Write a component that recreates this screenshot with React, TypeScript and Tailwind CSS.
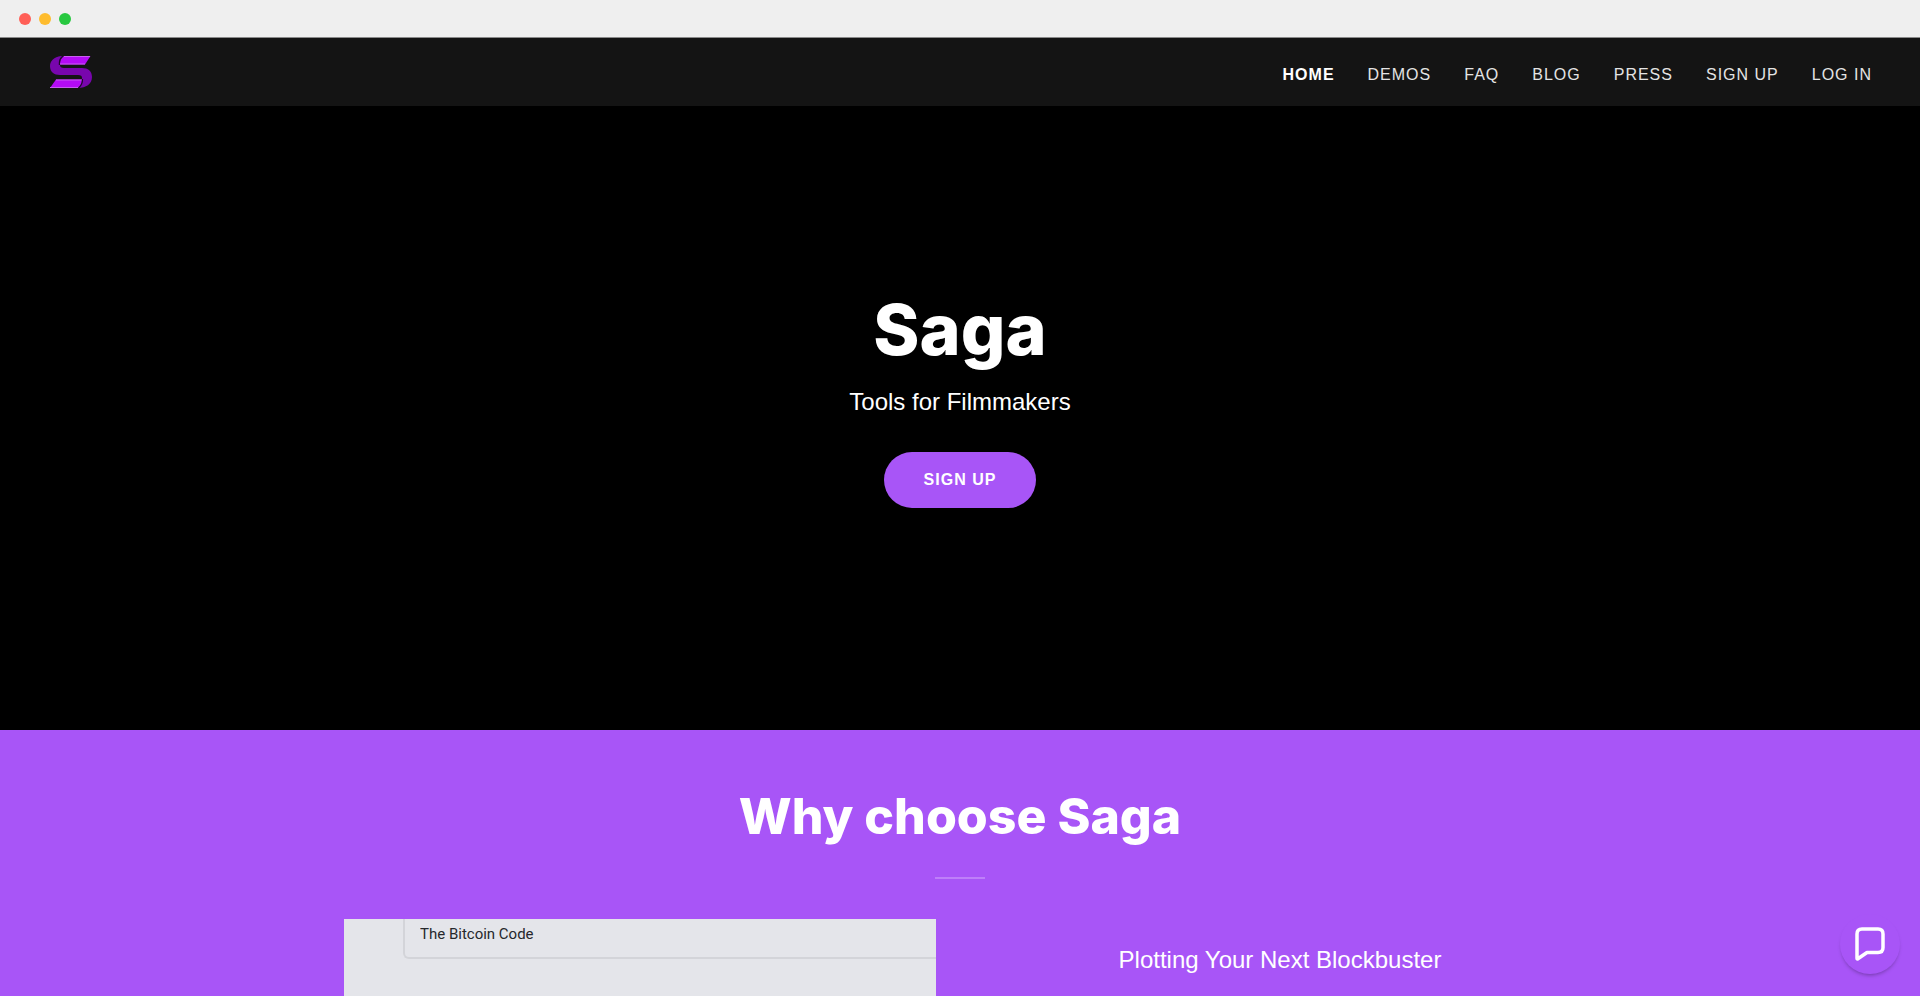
const navLinks = ['Home', 'Demos', 'FAQ', 'Blog', 'Press', 'Sign Up', 'Log In']

function Logo() {
  return (
    <svg viewBox="0 0 42 32" className="w-[42px] h-8" aria-hidden="true">
      <path d="M11 0C4 1 0 5 0 10c0 6 4 9 10 9h18c3 0 4 1 4 3 0 4-2 8-4 10 8 0 14-4 14-11 0-6-4-9-10-9H14c-3 0-4-1-4-3 0-4 1-7 3-9z" fill="#7806ad" />
      <path d="M14 0H40.500L35 8.500H10C10 5 11 2 14 0z" fill="#b40bf5" />
      <path d="M6 23.500H32C32 27 31 30 28 32H0z" fill="#b40bf5" />
      <path d="M14 .5H40M10 8H35M6 24H32M0 31.500H28" stroke="#c85cf0" strokeWidth="1" />
      <path d="M13 0C10 2 9 5 9.500 9M32.500 23C32.500 27 31 30 28.500 32" stroke="#1c0a26" strokeWidth="1.200" fill="none" />
    </svg>
  )
}

function BrowserBar() {
  return (
    <div className="flex items-center gap-2 h-[38px] pl-[19px] bg-[#efefef] border-b border-[#8a8a8a]">
      <span className="w-3 h-3 rounded-full bg-[#ff5f57]" />
      <span className="w-3 h-3 rounded-full bg-[#febc2e]" />
      <span className="w-3 h-3 rounded-full bg-[#28c840]" />
    </div>
  )
}

function Header() {
  return (
    <header className="flex items-center justify-between h-[68px] pl-[50px] pr-12 bg-[#141414]">
      <a href="#" aria-label="Saga">
        <Logo />
      </a>
      <nav className="flex gap-[33px] pt-1.5">
        {navLinks.map((label, i) => (
          <a
            key={label}
            href="#"
            className={i === 0
              ? 'text-base uppercase tracking-[1px] font-bold text-white'
              : 'text-base uppercase tracking-[1px] text-[#e4e4e4]'}
          >
            {label}
          </a>
        ))}
      </nav>
    </header>
  )
}

export default function App() {
  return (
    <div className="min-h-screen flex flex-col bg-[#a855f7] text-white font-['Liberation_Sans',Arial,sans-serif]">
      <BrowserBar />
      <Header />

      {/* Hero */}
      <section className="flex flex-col items-center pt-44 pb-[222px] bg-black">
        <h1 className="font-['Inter',sans-serif] font-extrabold text-[70px] leading-[96px]">Saga</h1>
        <p className="text-2xl mt-2">Tools for Filmmakers</p>
        <button type="button" className="mt-[34px] h-14 px-10 rounded-full bg-[#a855f7] text-base font-bold uppercase tracking-[1px]">
          Sign Up
        </button>
      </section>

      {/* Why choose Saga */}
      <section className="flex-1 flex flex-col items-center pt-[50px]">
        <h2 className="font-['Inter',sans-serif] font-extrabold text-[50px] leading-[72px]">Why choose Saga</h2>
        <hr className="w-[50px] mt-[25px] border-t-2 border-white/25" />
        <div className="flex-1 grid grid-cols-2 gap-12 w-full max-w-[1232px] mt-10">
          <div className="bg-[#e4e5ea] overflow-hidden pl-[59px]">
            <input
              readOnly
              aria-label="Title"
              value="The Bitcoin Code"
              className="block w-full h-10 pl-[15px] pb-2 rounded-bl-md border-l-2 border-b-2 border-[#d3d4d9] font-['Roboto',sans-serif] text-[15px] text-[#26282c]"
            />
          </div>
          <p className="text-2xl text-center pt-[25px]">Plotting Your Next Blockbuster</p>
        </div>
      </section>

      <button
        type="button"
        aria-label="Open chat"
        className="fixed right-5 bottom-[22px] w-[60px] h-[60px] rounded-full bg-[#a855f7] shadow-[0_3px_4px_-2px_rgba(0,0,0,0.35)] flex items-center justify-center"
      >
        <svg viewBox="0 0 30 34" className="w-[30px] h-[34px]" fill="none" stroke="white" strokeWidth="3.500" strokeLinejoin="round" aria-hidden="true">
          <path d="M7 2H23Q28 2 28 7V20.500Q28 25.500 23 25.500H12L2.500 32Q2 32 2 31V7Q2 2 7 2Z" />
        </svg>
      </button>
    </div>
  )
}
